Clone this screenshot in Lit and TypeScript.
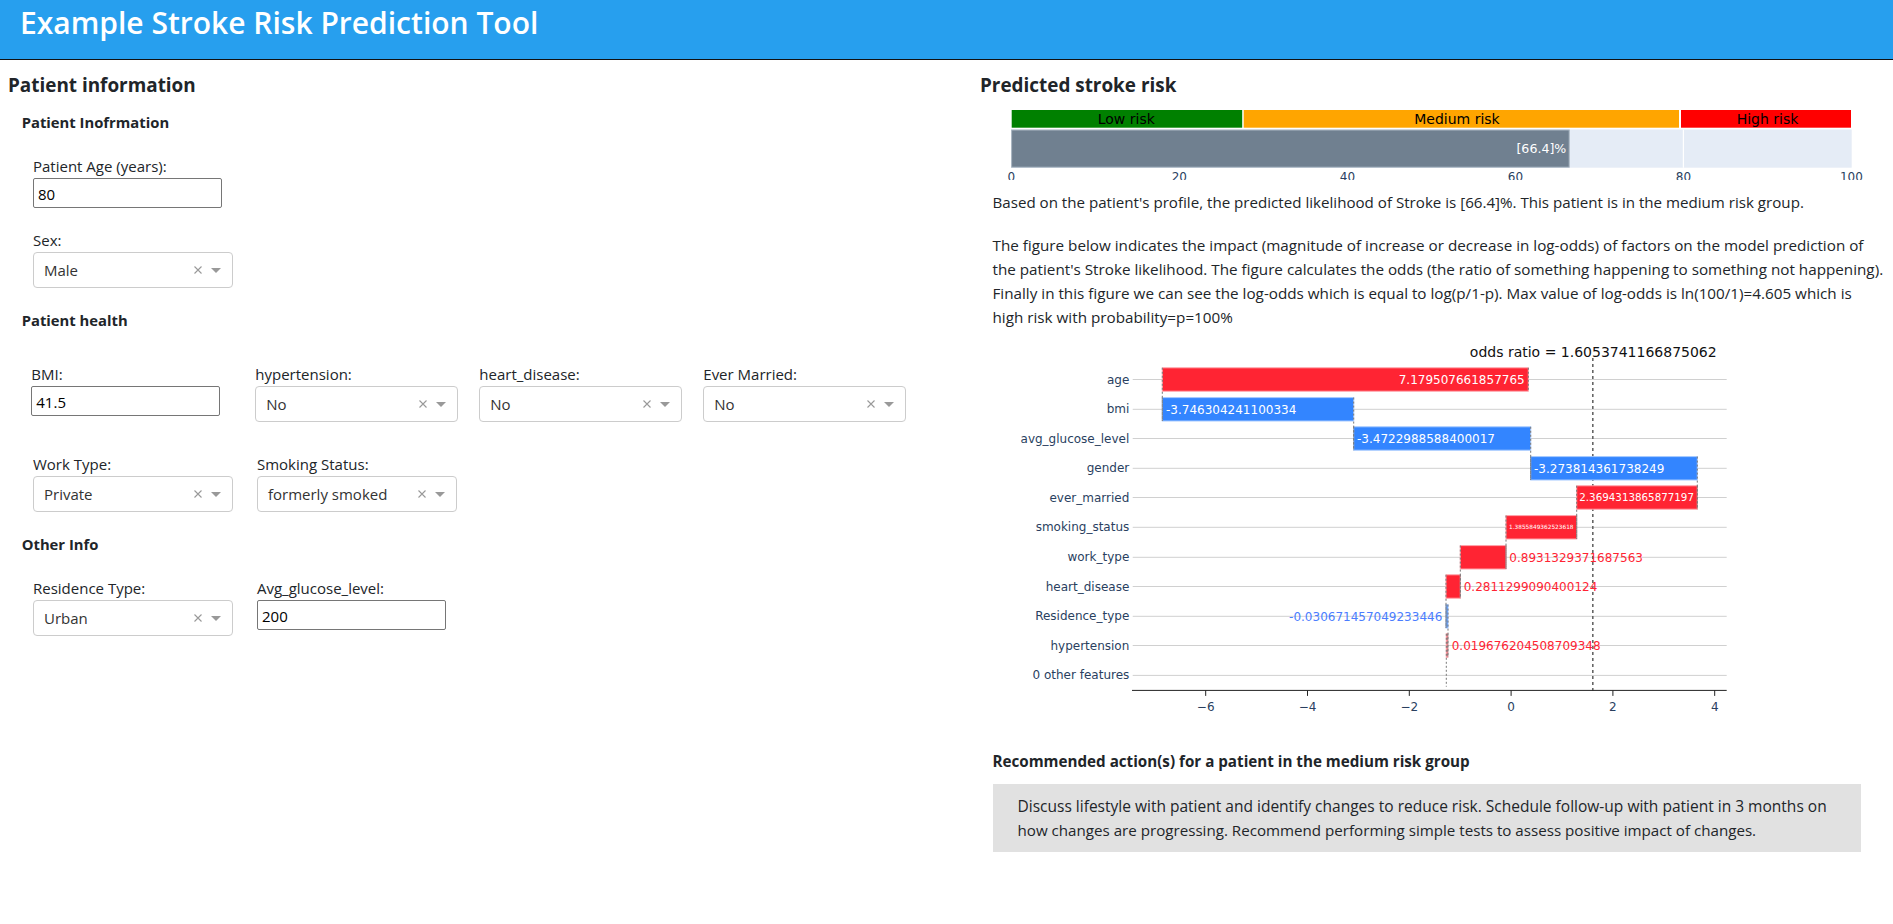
import { LitElement, css, html, svg } from "lit";
import { customElement } from "lit/decorators.js";

const xScale = (v: number) => 1511.1 + 50.9 * v;

type Bar = {
  name: string;
  y: number;
  x0: number;
  x1: number;
  kind: "up" | "down";
  label?: string;
  labelX?: number;
  labelSize?: number;
  labelAnchor?: "start" | "end";
  labelColor?: string;
};

const RED = "#ff2433";
const BLUE = "#3385ff";

const bars: Bar[] = [
  { name: "age", y: 379.5, x0: 1162.3, x1: 1528.3, kind: "up", label: "7.179507661857765", labelX: 1524.7, labelAnchor: "end", labelColor: "#fff" },
  { name: "bmi", y: 409.3, x0: 1162.3, x1: 1353.7, kind: "down", label: "-3.746304241100334", labelX: 1166, labelColor: "#fff" },
  { name: "avg_glucose_level", y: 438.5, x0: 1353.7, x1: 1530.7, kind: "down", label: "-3.4722988588400017", labelX: 1357, labelColor: "#fff" },
  { name: "gender", y: 468.3, x0: 1530.7, x1: 1697.3, kind: "down", label: "-3.273814361738249", labelX: 1534, labelColor: "#fff" },
  { name: "ever_married", y: 497.5, x0: 1576.7, x1: 1697.3, kind: "up", label: "2.3694313865877197", labelX: 1579.3, labelSize: 10.3, labelColor: "#fff" },
  { name: "smoking_status", y: 527.3, x0: 1506, x1: 1576.7, kind: "up", label: "1.3855849362523618", labelX: 1509, labelSize: 5.8, labelColor: "#fff" },
  { name: "work_type", y: 557.3, x0: 1460.3, x1: 1506, kind: "up", label: "0.8931329371687563", labelX: 1509.3, labelColor: RED },
  { name: "heart_disease", y: 586.5, x0: 1446, x1: 1460.3, kind: "up", label: "0.2811299090400124", labelX: 1463.7, labelColor: RED },
  { name: "Residence_type", y: 616.3, x0: 1446, x1: 1448, kind: "down", label: "-0.030671457049233446", labelX: 1442.3, labelAnchor: "end", labelColor: "#4a7dff" },
  { name: "hypertension", y: 645.5, x0: 1446.3, x1: 1447.8, kind: "up", label: "0.019676204508709348", labelX: 1451.7, labelColor: RED },
];

const gaugeTicks = [
  [0, 1011.3],
  [20, 1179.3],
  [40, 1347.4],
  [60, 1515.5],
  [80, 1683.4],
  [100, 1851.4],
];

@customElement("app-root")
export class AppRoot extends LitElement {
  static styles = css`
    :host {
      display: block;
      font-family: "Open Sans", "Noto Sans", sans-serif;
      font-size: 15px;
      line-height: 24px;
      color: #212529;
      background: #fff;
    }

    header {
      height: 59px;
      background: #279fee;
      border-bottom: 1px solid #111;
      padding-left: 20px;
      color: #fff;
      font-size: 30px;
      font-weight: 600;
      line-height: 46px;
      white-space: nowrap;
    }

    .columns {
      display: flex;
    }

    .left {
      width: 972px;
      padding: 13px 0 0 8px;
      box-sizing: border-box;
    }

    .right {
      flex: 1;
      padding: 13px 0 0 8px;
      min-width: 0;
    }

    h5 {
      margin: 0;
      font-size: 18.9px;
      font-weight: 700;
      line-height: 24px;
    }

    h6 {
      margin: 13px 0 0 13.7px;
      font-size: 14.8px;
      font-weight: 700;
      line-height: 24px;
    }

    h6.spaced {
      margin-top: 20px;
    }

    .row {
      display: flex;
      gap: 24.4px;
      margin: 20px 0 0 25px;
    }

    .row.sparse {
      margin-top: 30px;
    }

    .row.shift {
      margin-left: 23.3px;
      gap: 21px;
    }

    .field {
      width: 199.6px;
    }

    .row.shift .field {
      width: 203px;
    }

    label {
      display: block;
      white-space: nowrap;
    }

    input {
      display: block;
      box-sizing: border-box;
      width: 188.6px;
      height: 30px;
      padding: 1px 4px 0;
      border: 1px solid #767676;
      border-radius: 2px;
      background: #fff;
      color: #000;
      font: inherit;
      outline: none;
    }

    .select {
      box-sizing: border-box;
      display: flex;
      align-items: center;
      height: 36px;
      padding: 0 11px 0 10px;
      border: 1px solid #ccc;
      border-radius: 4px;
      color: #333;
      background: #fff;
    }

    .select .value {
      flex: 1;
      white-space: nowrap;
    }

    .select svg {
      display: block;
    }

    .select .clear {
      margin-right: 9px;
    }

    .gauge,
    .waterfall {
      display: block;
      margin-left: -8px;
    }

    .gauge {
      margin-top: 8px;
    }

    .right p {
      margin: 0 0 0 12.5px;
      white-space: nowrap;
    }

    .right p.first {
      margin-top: 10px;
      font-size: 15.14px;
    }

    .right p.second {
      margin-top: 19px;
      font-size: 15.24px;
    }

    .waterfall {
      margin-top: 11px;
    }

    .rec-title {
      margin: 19.4px 0 0 12.5px;
      font-size: 15.2px;
      font-weight: 700;
      line-height: 24px;
    }

    .rec-box {
      margin: 10.6px 0 0 12.5px;
      width: 868px;
      height: 68px;
      box-sizing: border-box;
      padding: 10px 0 0 25px;
      background: #e1e1e1;
      white-space: nowrap;
    }

    .rec-box .line-a {
      font-size: 15.53px;
    }

    .rec-box .line-b {
      font-size: 15.15px;
    }

    svg text {
      font-family: "DejaVu Sans", Verdana, sans-serif;
      font-size: 12px;
    }

    svg text.big {
      font-size: 14px;
    }

    svg text.pct {
      font-size: 12.6px;
    }
  `;

  private textInput(value: string) {
    return html`<input type="text" .value=${value} />`;
  }

  private dropdown(value: string) {
    return html`
      <div class="select">
        <span class="value">${value}</span>
        <svg class="clear" width="8" height="8" viewBox="0 0 8 8">
          <path d="M.5.5l7 7M7.5.5l-7 7" stroke="#999" stroke-width="1.1" fill="none"></path>
        </svg>
        <svg width="10" height="5" viewBox="0 0 10 5">
          <path d="M0 0h10L5 5z" fill="#999"></path>
        </svg>
      </div>
    `;
  }

  private gauge() {
    return html`
      <svg class="gauge" width="921" height="75" viewBox="972 105 921 75">
        <rect x="1011.7" y="110" width="230.5" height="17.7" fill="#008000"></rect>
        <rect x="1243.7" y="110" width="435.3" height="17.7" fill="#ffa500"></rect>
        <rect x="1681" y="110" width="170" height="17.7" fill="#ff0000"></rect>
        <text class="big" x="1126.3" y="124" text-anchor="middle">Low risk</text>
        <text class="big" x="1457" y="124" text-anchor="middle">Medium risk</text>
        <text class="big" x="1767.5" y="124" text-anchor="middle">High risk</text>

        <rect x="1011" y="129.5" width="840.7" height="38.2" fill="#e5ecf6"></rect>
        <line x1="1683.4" x2="1683.4" y1="129.5" y2="167.7" stroke="#fff" stroke-width="1.2"></line>
        <rect x="1011.6" y="130" width="557.6" height="37.2" fill="#708090" stroke="#a9b5c2" stroke-width="1"></rect>
        <text class="pct" x="1566.3" y="153.3" text-anchor="end" fill="#fff">[66.4]%</text>
        ${gaugeTicks.map(
          ([label, x]) => svg`<text x=${x} y="181" text-anchor="middle" fill="#2a3f5f">${label}</text>`
        )}
      </svg>
    `;
  }

  private waterfall() {
    const axisY = 690.4;
    return html`
      <svg class="waterfall" width="921" height="390" viewBox="972 340 921 390">
        ${bars.map(
          (b) => svg`<line x1="1132.7" x2="1726.7" y1=${b.y} y2=${b.y} stroke="#d0d0d0"></line>`
        )}
        <line x1="1132.7" x2="1726.7" y1="675.4" y2="675.4" stroke="#d0d0d0"></line>

        <line x1="1592.8" x2="1592.8" y1="358" y2=${axisY} stroke="#666" stroke-width="1.6" stroke-dasharray="3 3"></line>

        ${bars.map(
          (b) => svg`
            <rect x=${b.x0} y=${b.y - 11.7} width=${b.x1 - b.x0} height="23.4"
              fill=${b.kind === "up" ? RED : BLUE}
              stroke=${b.kind === "up" ? "#ffa3ab" : "#a6c9ff"}></rect>
          `
        )}

        ${bars.map((b, i) => {
          const next = bars[i + 1];
          const x = b.kind === "up" ? b.x0 : b.x1;
          const y2 = next ? next.y + 11.7 : 686.7;
          return svg`
            <line x1=${x} x2=${x} y1=${b.y - 11.7} y2=${y2} stroke="#777" stroke-dasharray="2 2"></line>
            <line x1=${b.kind === "up" ? b.x1 : b.x0} x2=${b.kind === "up" ? b.x1 : b.x0}
              y1=${b.y - 11.7} y2=${b.y + 11.7} stroke="#777" stroke-dasharray="2 2"></line>
          `;
        })}

        ${bars.map(
          (b) => svg`
            <text x="1129.3" y=${b.y + 4} text-anchor="end" fill="#2a3f5f">${b.name}</text>
            <text x=${b.labelX} y=${b.y + (b.labelSize ?? 12) * 0.36}
              text-anchor=${b.labelAnchor ?? "start"} fill=${b.labelColor}
              style="font-size:${b.labelSize ?? 12}px">${b.label}</text>
          `
        )}
        <text x="1129.3" y="679.4" text-anchor="end" fill="#2a3f5f">0 other features</text>

        <text class="big" x="1716.7" y="356.5" text-anchor="end" fill="#111">odds ratio = 1.6053741166875062</text>

        <line x1="1132" x2="1726.7" y1=${axisY} y2=${axisY} stroke="#222"></line>
        ${[-6, -4, -2, 0, 2, 4].map(
          (v) => svg`
            <line x1=${xScale(v)} x2=${xScale(v)} y1=${axisY} y2=${axisY + 5.5} stroke="#222"></line>
            <text x=${xScale(v)} y="711" text-anchor="middle" fill="#2a3f5f">${v < 0 ? `\u2212${-v}` : v}</text>
          `
        )}
      </svg>
    `;
  }

  render() {
    return html`
      <header>Example Stroke Risk Prediction Tool</header>
      <div class="columns">
        <section class="left">
          <h5>Patient information</h5>
          <h6>Patient Inofrmation</h6>
          <div class="row">
            <div class="field"><label>Patient Age (years):</label>${this.textInput("80")}</div>
          </div>
          <div class="row">
            <div class="field"><label>Sex:</label>${this.dropdown("Male")}</div>
          </div>

          <h6 class="spaced">Patient health</h6>
          <div class="row sparse shift">
            <div class="field"><label>BMI:</label>${this.textInput("41.5")}</div>
            <div class="field"><label>hypertension:</label>${this.dropdown("No")}</div>
            <div class="field"><label>heart_disease:</label>${this.dropdown("No")}</div>
            <div class="field"><label>Ever Married:</label>${this.dropdown("No")}</div>
          </div>
          <div class="row sparse">
            <div class="field"><label>Work Type:</label>${this.dropdown("Private")}</div>
            <div class="field"><label>Smoking Status:</label>${this.dropdown("formerly smoked")}</div>
          </div>

          <h6 class="spaced">Other Info</h6>
          <div class="row">
            <div class="field"><label>Residence Type:</label>${this.dropdown("Urban")}</div>
            <div class="field"><label>Avg_glucose_level:</label>${this.textInput("200")}</div>
          </div>
        </section>

        <section class="right">
          <h5>Predicted stroke risk</h5>
          ${this.gauge()}
          <p class="first">Based on the patient's profile, the predicted likelihood of Stroke is [66.4]%. This patient is in the medium risk group.</p>
          <p class="second">
            The figure below indicates the impact (magnitude of increase or decrease in log-odds) of factors on the model prediction of<br />
            the patient's Stroke likelihood. The figure calculates the odds (the ratio of something happening to something not happening).<br />
            Finally in this figure we can see the log-odds which is equal to log(p/1-p). Max value of log-odds is ln(100/1)=4.605 which is<br />
            high risk with probability=p=100%
          </p>
          ${this.waterfall()}
          <div class="rec-title">Recommended action(s) for a patient in the medium risk group</div>
          <div class="rec-box">
            <span class="line-a">Discuss lifestyle with patient and identify changes to reduce risk. Schedule follow-up with patient in 3 months on</span><br />
            <span class="line-b">how changes are progressing. Recommend performing simple tests to assess positive impact of changes.</span>
          </div>
        </section>
      </div>
    `;
  }
}
